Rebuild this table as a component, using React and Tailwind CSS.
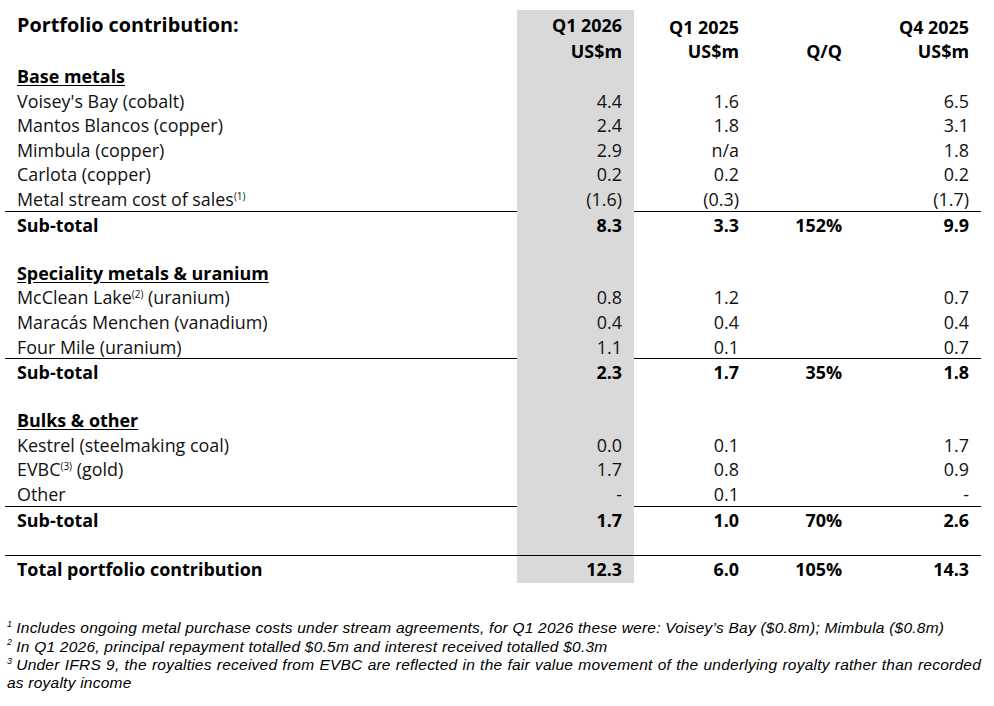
import React from 'react';

const cols = 'grid grid-cols-[512px_117px_117px_103px_127px] h-[24.6px] items-center';
const shade = 'bg-[#d9d9d9] h-full flex items-center justify-end px-3';
const num = 'text-right px-3';

const sections = [
  {
    title: 'Base metals',
    rows: [
      ["Voisey's Bay (cobalt)", '4.4', '1.6', '6.5'],
      ['Mantos Blancos (copper)', '2.4', '1.8', '3.1'],
      ['Mimbula (copper)', '2.9', 'n/a', '1.8'],
      ['Carlota (copper)', '0.2', '0.2', '0.2'],
      [<>Metal stream cost of sales<sup className="text-[10px] -top-[0.6em]">(1)</sup></>, '(1.6)', '(0.3)', '(1.7)'],
    ],
    sub: ['8.3', '3.3', '152%', '9.9'],
  },
  {
    title: 'Speciality metals & uranium',
    rows: [
      [<>McClean Lake<sup className="text-[10px] -top-[0.6em]">(2)</sup> (uranium)</>, '0.8', '1.2', '0.7'],
      ['Maracás Menchen (vanadium)', '0.4', '0.4', '0.4'],
      ['Four Mile (uranium)', '1.1', '0.1', '0.7'],
    ],
    sub: ['2.3', '1.7', '35%', '1.8'],
  },
  {
    title: 'Bulks & other',
    rows: [
      ['Kestrel (steelmaking coal)', '0.0', '0.1', '1.7'],
      [<>EVBC<sup className="text-[10px] -top-[0.6em]">(3)</sup> (gold)</>, '1.7', '0.8', '0.9'],
      ['Other', '-', '0.1', '-'],
    ],
    sub: ['1.7', '1.0', '70%', '2.6'],
  },
];

const Row = ({ cells, bold, border, className = '' }) => (
  <div className={`${cols} ${border ? 'border-t border-black' : ''} ${bold ? 'font-bold text-black' : ''} ${className}`}>
    <div className="px-3">{cells[0]}</div>
    <div className={shade}>{cells[1]}</div>
    <div className={num}>{cells[2]}</div>
    <div className={num}>{cells[3]}</div>
    <div className={num}>{cells[4]}</div>
  </div>
);

export default function App() {
  return (
    <div className="w-[994px] h-[706px] bg-white text-[#111] font-['Open_Sans',sans-serif] text-[17.9px]">
      <div className="pt-[10px] pl-[5px] w-[981px]">
        {/* header */}
        <div className="grid grid-cols-[512px_117px_117px_103px_127px] h-[28.4px] items-end font-bold text-black">
          <div className="px-3 text-[19.8px] self-center leading-none pt-[2px]">Portfolio contribution:</div>
          <div className={`${shade} items-end`}>Q1 2026</div>
          <div className={`${num} h-[24.6px]`}>Q1 2025</div>
          <div></div>
          <div className={`${num} h-[24.6px]`}>Q4 2025</div>
        </div>
        <Row cells={['', 'US$m', 'US$m', 'Q/Q', 'US$m']} bold />
        {sections.map((s, i) => (
          <React.Fragment key={i}>
            {i > 0 && <Row cells={['', '', '', '', '']} />}
            <Row cells={[<span className="underline underline-offset-2">{s.title}</span>, '', '', '', '']} bold />
            {s.rows.map((r, j) => (
              <Row key={j} cells={[r[0], r[1], r[2], '', r[3]]} />
            ))}
            <Row cells={['Sub-total', ...s.sub]} bold border />
          </React.Fragment>
        ))}
        <Row cells={['', '', '', '', '']} />
        <Row cells={['Total portfolio contribution', '12.3', '6.0', '105%', '14.3']} bold border />
      </div>

      {/* footnotes */}
      <div className="mt-[40px] pl-[7px] w-[981px] font-['Liberation_Sans',Arial,sans-serif] italic text-[15.5px] tracking-[0.23px] leading-[18.3px] text-black">
        <div><sup className="text-[9px] -top-[0.7em] mr-[4px]">1</sup>Includes ongoing metal purchase costs under stream agreements, for Q1 2026 these were: Voisey’s Bay ($0.8m); Mimbula ($0.8m)</div>
        <div><sup className="text-[9px] -top-[0.7em] mr-[4px]">2</sup>In Q1 2026, principal repayment totalled $0.5m and interest received totalled $0.3m</div>
        <div className="text-justify [text-align-last:justify]"><sup className="text-[9px] -top-[0.7em] mr-[4px]">3</sup>Under IFRS 9, the royalties received from EVBC are reflected in the fair value movement of the underlying royalty rather than recorded</div>
        <div>as royalty income</div>
      </div>
    </div>
  );
}
